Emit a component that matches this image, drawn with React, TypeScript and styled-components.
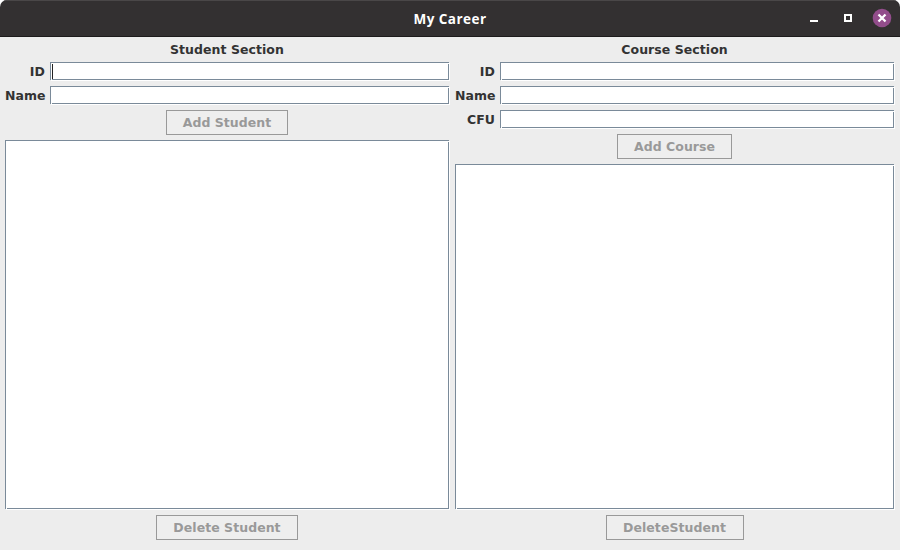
import React from "react";
import styled, { createGlobalStyle } from "styled-components";

const GlobalStyle = createGlobalStyle`
  * { box-sizing: border-box; }
  body { margin: 0; background: #fff; overflow: hidden; }
`;

const Window = styled.div`
  width: 900px;
  height: 550px;
  display: flex;
  flex-direction: column;
  background: #ededed;
  color: #333;
  font: bold 12.5px/16px "DejaVu Sans", sans-serif;
  letter-spacing: 0.05px;
  border-radius: 7px 7px 0 0;
  overflow: hidden;
`;

const TitleBar = styled.header`
  height: 37px;
  flex: none;
  display: grid;
  grid-template-columns: 1fr auto 1fr;
  align-items: center;
  background: #333031;
  border-top: 1px solid #4a4748;
  border-bottom: 1px solid #1d1b1c;
`;

const Title = styled.h1`
  grid-column: 2;
  margin: 1px 0 0;
  color: #fff;
  font: bold 13.5px/18px "Open Sans", "Noto Sans", sans-serif;
  letter-spacing: 0.45px;
`;

const Controls = styled.svg`
  justify-self: end;
  align-self: start;
  display: block;
`;

const Content = styled.main`
  flex: 1;
  display: flex;
  gap: 5px;
  padding: 5px 5px 10px;
`;

const Panel = styled.section<{ $width: number }>`
  width: ${(p) => p.$width}px;
  display: flex;
  flex-direction: column;
  align-items: center;
`;

const Heading = styled.h2`
  margin: 0 1px 4px 0;
  height: 16px;
  font: inherit;
`;

const FormRow = styled.label`
  width: 100%;
  height: 19px;
  margin-bottom: 5px;
  display: grid;
  grid-template-columns: 40px 1fr;
  column-gap: 5px;
  align-items: center;
  text-align: right;
  white-space: nowrap;
`;

/* Etched frame: grey inner lines, with a white highlight on the lower right. */
const Frame = styled.div`
  position: relative;
  border: 1px solid #7a8a99;
  background: #fff;
  box-shadow: 1px 1px 0 #fff;
  margin: 0 1px 1px 0;
  &::before, &::after {
    content: "";
    position: absolute;
    width: 1px;
    height: 1px;
    background: #fff;
  }
  &::before { left: 0; bottom: -1px; }
  &::after { right: -1px; top: 0; }
`;

const Field = styled(Frame)`
  height: 18px;
  padding: 1px;
`;

const Caret = styled.div`
  width: 1px;
  height: 15px;
  background: #222;
`;

const ListBox = styled(Frame)`
  flex: 1;
  align-self: stretch;
`;

const Button = styled.button<{ $width: number }>`
  width: ${(p) => p.$width}px;
  height: 25px;
  flex: none;
  padding: 0;
  border: 1px solid #999;
  background: #eee;
  color: #999;
  font: inherit;
  letter-spacing: inherit;
  white-space: nowrap;
`;

const AddButton = styled(Button)`
  margin: 0 1px 5px 0;
`;

const DeleteButton = styled(Button)`
  margin: 5px 1px 0 0;
`;

function WindowControls() {
  return (
    <Controls width="100" height="34" viewBox="800 1 100 34" shapeRendering="crispEdges">
      <path d="M810 20h8v2h-8z" fill="#fff" />
      <path d="M845 15h6v6h-6z" fill="none" stroke="#fff" strokeWidth="2" />
      <circle cx="882" cy="18" r="9.3" fill="#924d8b" shapeRendering="auto" />
      <path d="M878.5 14.5l7 7M885.5 14.5l-7 7" stroke="#fff" strokeWidth="2.3" shapeRendering="auto" />
    </Controls>
  );
}

interface SectionProps {
  title: string;
  width: number;
  fields: string[];
  add: string;
  addWidth: number;
  remove: string;
  removeWidth: number;
  focused?: boolean;
}

function Section({ title, width, fields, add, addWidth, remove, removeWidth, focused }: SectionProps) {
  return (
    <Panel $width={width}>
      <Heading>{title}</Heading>
      {fields.map((name, i) => (
        <FormRow key={name}>
          <span>{name}</span>
          <Field>{focused && i === 0 && <Caret />}</Field>
        </FormRow>
      ))}
      <AddButton $width={addWidth} disabled>{add}</AddButton>
      <ListBox />
      <DeleteButton $width={removeWidth} disabled>{remove}</DeleteButton>
    </Panel>
  );
}

export default function App() {
  return (
    <>
      <GlobalStyle />
      <Window>
        <TitleBar>
          <span />
          <Title>My Career</Title>
          <WindowControls />
        </TitleBar>
        <Content>
          <Section title="Student Section" width={445} fields={["ID", "Name"]} add="Add Student" addWidth={122} remove="Delete Student" removeWidth={142} focused />
          <Section title="Course Section" width={440} fields={["ID", "Name", "CFU"]} add="Add Course" addWidth={115} remove="DeleteStudent" removeWidth={138} />
        </Content>
      </Window>
    </>
  );
}
